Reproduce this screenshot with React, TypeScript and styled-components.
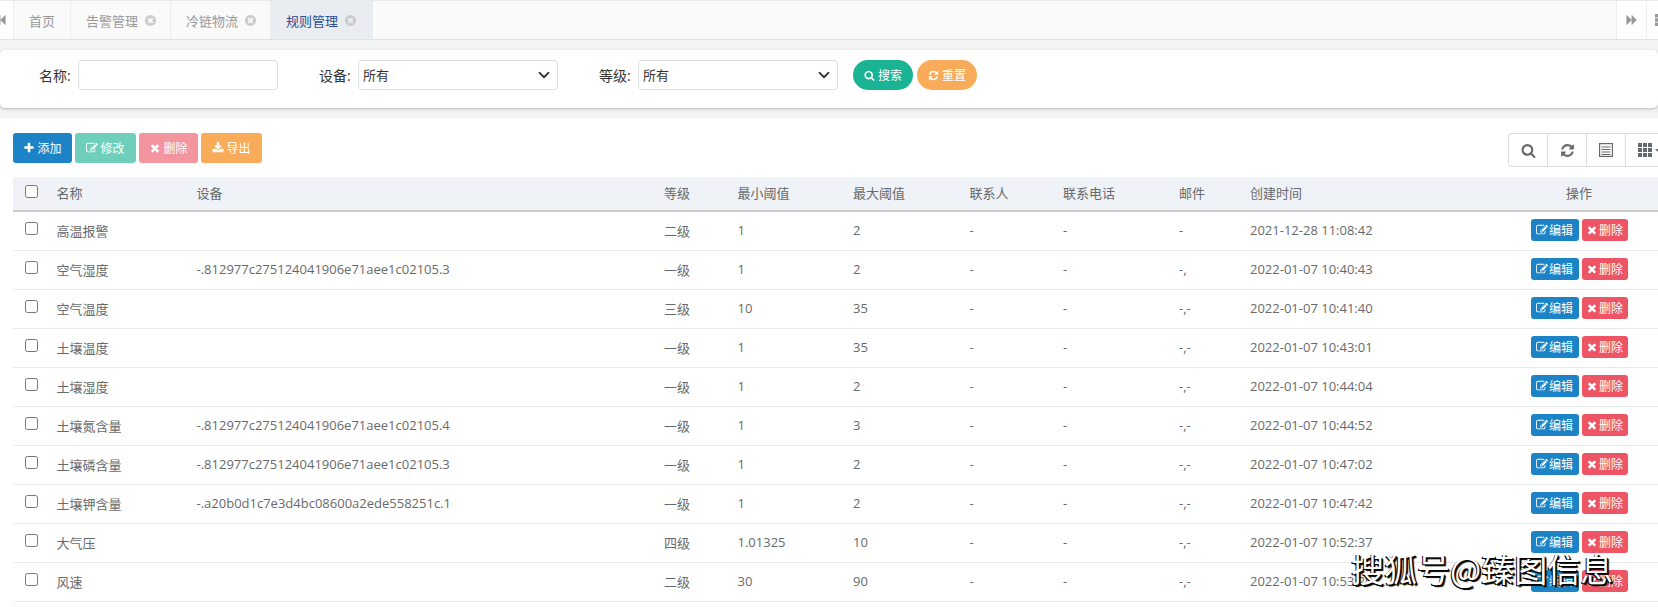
import React from "react";
import styled, {createGlobalStyle} from "styled-components";

const FONT = `"Open Sans", "Noto Sans CJK SC", sans-serif`;

const GlobalStyle = createGlobalStyle`
  html, body {
    margin: 0;
    height: 607px;
    overflow: hidden;
    background: #f3f3f4;
    font-family: ${FONT};
    font-size: 13px;
    color: #676a6c;
  }
`

// font awesome 4 outlines, 1792 grid
const ICONS = {
    plus: "M1600 736v192q0 40-28 68t-68 28h-416v416q0 40-28 68t-68 28h-192q-40 0-68-28t-28-68v-416h-416q-40 0-68-28t-28-68v-192q0-40 28-68t68-28h416v-416q0-40 28-68t68-28h192q40 0 68 28t28 68v416h416q40 0 68 28t28 68z",
    edit: "M888 1184l116-116-152-152-116 116v56h96v96h56zm440-720q-16-16-33 1l-350 350q-17 17-1 33t33-1l350-350q17-17 1-33zm80 594v190q0 119-84.5 203.5t-203.5 84.5h-832q-119 0-203.5-84.5t-84.5-203.5v-832q0-119 84.5-203.5t203.5-84.5h832q63 0 117 25 15 7 18 23 3 17-9 29l-49 49q-14 14-32 8-23-6-45-6h-832q-66 0-113 47t-47 113v832q0 66 47 113t113 47h832q66 0 113-47t47-113v-126q0-13 9-22l64-64q15-15 35-7t20 29zm-96-738l288 288-672 672h-288v-288zm444 132l-92 92-288-288 92-92q28-28 68-28t68 28l152 152q28 28 28 68t-28 68z",
    times: "M1490 1322q0 40-28 68l-136 136q-28 28-68 28t-68-28l-294-294-294 294q-28 28-68 28t-68-28l-136-136q-28-28-28-68t28-68l294-294-294-294q-28-28-28-68t28-68l136-136q28-28 68-28t68 28l294 294 294-294q28-28 68-28t68 28l136 136q28 28 28 68t-28 68l-294 294 294 294q28 28 28 68z",
    download: "M1344 1344q0-26-19-45t-45-19-45 19-19 45 19 45 45 19 45-19 19-45zm256 0q0-26-19-45t-45-19-45 19-19 45 19 45 45 19 45-19 19-45zm128-224v320q0 40-28 68t-68 28h-1472q-40 0-68-28t-28-68v-320q0-40 28-68t68-28h465l135 136q58 56 136 56t136-56l136-136h464q40 0 68 28t28 68zm-325-569q17 41-14 70l-448 448q-18 19-45 19t-45-19l-448-448q-31-29-14-70 17-39 59-39h256v-448q0-26 19-45t45-19h256q26 0 45 19t19 45v448h256q42 0 59 39z",
    search: "M1216 832q0-185-131.5-316.5t-316.5-131.5-316.5 131.5-131.5 316.5 131.5 316.5 316.5 131.5 316.5-131.5 131.5-316.5zm512 832q0 52-38 90t-90 38q-54 0-90-38l-343-342q-179 124-399 124-143 0-273.5-55.5t-225-150-150-225-55.5-273.5 55.5-273.5 150-225 225-150 273.5-55.5 273.5 55.5 225 150 150 225 55.5 273.5q0 220-124 399l343 343q37 37 37 90z",
    refresh: "M1639 1056q0 5-1 7-64 268-268 434.5t-478 166.5q-146 0-282.5-55t-243.5-157l-129 129q-19 19-45 19t-45-19-19-45v-448q0-26 19-45t45-19h448q26 0 45 19t19 45-19 45l-137 137q71 66 161 102t187 36q134 0 250-65t186-179q11-17 53-117 8-23 30-23h192q13 0 22.5 9.5t9.5 22.5zm25-800v448q0 26-19 45t-45 19h-448q-26 0-45-19t-19-45 19-45l138-138q-148-137-349-137-134 0-250 65t-186 179q-11 17-53 117-8 23-30 23h-199q-13 0-22.5-9.5t-9.5-22.5v-7q65-268 270-434.5t480-166.5q146 0 284 55.5t245 156.5l130-129q19-19 45-19t45 19 19 45z",
    timesCircle: "M1277 1122q0-26-19-45l-181-181 181-181q19-19 19-45 0-27-19-46l-90-90q-19-19-46-19-26 0-45 19l-181 181-181-181q-19-19-45-19-27 0-46 19l-90 90q-19 19-19 46 0 26 19 45l181 181-181 181q-19 19-19 45 0 27 19 46l90 90q19 19 46 19 26 0 45-19l181-181 181 181q19 19 45 19 27 0 46-19l90-90q19-19 19-46zm387-226q0 209-103 385.5t-279.5 279.5-385.5 103-385.5-103-279.5-279.5-103-385.5 103-385.5 279.5-279.5 385.5-103 385.5 103 279.5 279.5 103 385.5z",
    backward: "M1683 141q19-19 32-13t13 32v1472q0 26-13 32t-32-13l-710-710q-9-9-13-19v710q0 26-13 32t-32-13l-710-710q-19-19-19-45t19-45l710-710q19-19 32-13t13 32v710q4-10 13-19z",
    forward: "M109 1651q-19 19-32 13t-13-32v-1472q0-26 13-32t32 13l710 710q9 9 13 19v-710q0-26 13-32t32 13l710 710q19 19 19 45t-19 45l-710 710q-19 19-32 13t-13-32v-710q-4 10-13 19z",
};

const Icon = ({name}: { name: keyof typeof ICONS }) => (
    <svg viewBox="0 0 1792 1792" width="1em" height="1em" fill="currentColor">
        <path d={ICONS[name]}/>
    </svg>
);

const ListIcon = () => (
    <svg viewBox="0 0 14 14" width="14" height="14" fill="none" stroke="currentColor">
        <rect x="0.5" y="0.5" width="13" height="13" strokeWidth="1.4"/>
        <path d="M2.5 4h9M2.5 6.5h9M2.5 9h9M2.5 11.5h9" strokeWidth="1.1"/>
    </svg>
);

const GridIcon = () => (
    <svg viewBox="0 0 14 14" width="14" height="14" fill="currentColor">
        {[0, 5, 10].map(y => [0, 5, 10].map(x => (
            <rect key={`${x}-${y}`} x={x} y={y} width="4" height="4"/>
        )))}
    </svg>
);

const rows = [
    ["高温报警", "", "二级", "1", "2", "-", "2021-12-28 11:08:42"],
    ["空气湿度", "-.812977c275124041906e71aee1c02105.3", "一级", "1", "2", "-,", "2022-01-07 10:40:43"],
    ["空气温度", "", "三级", "10", "35", "-,-", "2022-01-07 10:41:40"],
    ["土壤温度", "", "一级", "1", "35", "-,-", "2022-01-07 10:43:01"],
    ["土壤湿度", "", "一级", "1", "2", "-,-", "2022-01-07 10:44:04"],
    ["土壤氮含量", "-.812977c275124041906e71aee1c02105.4", "一级", "1", "3", "-,-", "2022-01-07 10:44:52"],
    ["土壤磷含量", "-.812977c275124041906e71aee1c02105.3", "一级", "1", "2", "-,-", "2022-01-07 10:47:02"],
    ["土壤钾含量", "-.a20b0d1c7e3d4bc08600a2ede558251c.1", "一级", "1", "2", "-,-", "2022-01-07 10:47:42"],
    ["大气压", "", "四级", "1.01325", "10", "-,-", "2022-01-07 10:52:37"],
    ["风速", "", "二级", "30", "90", "-,-", "2022-01-07 10:53:20"],
];

const columns = [35.5, 140, 467.5, 73.5, 115.5, 116.5, 93.5, 116, 71, 258, 158];
const headers = ["名称", "设备", "等级", "最小阈值", "最大阈值", "联系人", "联系电话", "邮件", "创建时间"];

const App = () => (
    <Page>
        <GlobalStyle/>
        <TabBar>
            <NavEdge><Icon name="backward"/></NavEdge>
            <Tab>首页</Tab>
            <Tab>告警管理<CloseMark><Icon name="timesCircle"/></CloseMark></Tab>
            <Tab>冷链物流<CloseMark><Icon name="timesCircle"/></CloseMark></Tab>
            <Tab $active>规则管理<CloseMark><Icon name="timesCircle"/></CloseMark></Tab>
            <TabSpacer/>
            <NavButton><Icon name="forward"/></NavButton>
            <NavExit><GridIcon/></NavExit>
        </TabBar>

        <SearchCard>
            <Label>名称:</Label>
            <TextInput type="text"/>
            <Label $gap>设备:</Label>
            <Select><option>所有</option></Select>
            <Label $gap>等级:</Label>
            <Select><option>所有</option></Select>
            <PillRow>
                <PillButton $color="#1ab394"><Icon name="search"/>搜索</PillButton>
                <PillButton $color="#f8ac59"><Icon name="refresh"/>重置</PillButton>
            </PillRow>
        </SearchCard>

        <TableCard>
            <ToolRow>
                <ActionGroup>
                    <ActionButton $color="#1c84c6" $width={59}><Icon name="plus"/>添加</ActionButton>
                    <ActionButton $color="#1ab394" $width={61} $disabled><Icon name="edit"/>修改</ActionButton>
                    <ActionButton $color="#ed5565" $width={59} $disabled><Icon name="times"/>删除</ActionButton>
                    <ActionButton $color="#f8ac59" $width={61}><Icon name="download"/>导出</ActionButton>
                </ActionGroup>
                <ToolGroup>
                    <ToolButton><Icon name="search"/></ToolButton>
                    <ToolButton><Icon name="refresh"/></ToolButton>
                    <ToolButton><ListIcon/></ToolButton>
                    <ToolButton><GridIcon/><Caret/></ToolButton>
                </ToolGroup>
            </ToolRow>
            <Table>
                <colgroup>
                    {columns.map((w, i) => <col key={i} style={{width: w}}/>)}
                </colgroup>
                <thead>
                <tr>
                    <HeadCell><Check type="checkbox"/></HeadCell>
                    {headers.map(h => <HeadCell key={h}>{h}</HeadCell>)}
                    <HeadCell $center>操作</HeadCell>
                </tr>
                </thead>
                <tbody>
                {rows.map((r, i) => (
                    <tr key={i}>
                        <Cell><Check type="checkbox"/></Cell>
                        <Cell>{r[0]}</Cell>
                        <Cell>{r[1]}</Cell>
                        <Cell>{r[2]}</Cell>
                        <Cell>{r[3]}</Cell>
                        <Cell>{r[4]}</Cell>
                        <Cell>-</Cell>
                        <Cell>-</Cell>
                        <Cell>{r[5]}</Cell>
                        <Cell>{r[6]}</Cell>
                        <Cell $center>
                            <RowButton $color="#1c84c6" $width={48}><Icon name="edit"/>编辑</RowButton>
                            <RowButton $color="#ed5565" $width={46}><Icon name="times"/>删除</RowButton>
                        </Cell>
                    </tr>
                ))}
                </tbody>
            </Table>
        </TableCard>
        <Watermark>搜狐号@臻图信息</Watermark>
    </Page>
);

export default App;

const Page = styled.div`
  position: relative;
  width: 1658px;
  height: 607px;
  overflow: hidden;
`

const TabBar = styled.div`
  display: flex;
  height: 40px;
  box-sizing: border-box;
  border-top: 1px solid #e7eaec;
  border-bottom: 1px solid #dfe1e4;
  background: #fafafa;
`

const NavEdge = styled.div`
  width: 14px;
  flex: none;
  overflow: hidden;
  background: #fff;
  color: #999;
  display: flex;
  align-items: center;
  font-size: 12px;
  border-right: 1px solid #eee;
  box-sizing: border-box;

  svg {
    flex: none;
    margin-left: -6px;
  }
`

const Tab = styled.div<{ $active?: boolean }>`
  display: flex;
  align-items: center;
  min-width: 57px;
  padding: 0 ${p => p.$active ? 15 : 13}px 0 15px;
  box-sizing: border-box;
  font-size: 13px;
  color: ${p => p.$active ? "#2b4f8f" : "#999"};
  background: ${p => p.$active ? "#e9ecf1" : "transparent"};
  border-right: 1px solid ${p => p.$active ? "#e9ecf1" : "#eee"};
`

const CloseMark = styled.span`
  display: flex;
  margin-left: 6px;
  color: #ccc;
  font-size: 13px;
`

const TabSpacer = styled.div`
  flex: 1;
`

const NavButton = styled.div`
  width: 30px;
  flex: none;
  box-sizing: border-box;
  border-left: 1px solid #eee;
  background: #fff;
  color: #999;
  font-size: 12px;
  display: flex;
  align-items: center;
  justify-content: center;
`

const NavExit = styled(NavButton)`
  width: 12px;
  justify-content: flex-start;
  padding-left: 8px;
  overflow: hidden;

  svg {
    flex: none;
    width: 12px;
    height: 12px;
  }
`

const SearchCard = styled.div`
  display: flex;
  align-items: center;
  height: 58px;
  margin-top: 10px;
  padding: 10px 0 18px 39px;
  box-sizing: border-box;
  background: #fff;
  border-radius: 5px;
  box-shadow: 0 1px 3px rgba(0, 0, 0, .25);
`

const Label = styled.label<{ $gap?: boolean }>`
  flex: none;
  width: 31px;
  font-size: 14px;
  white-space: nowrap;
  color: #333;
  margin-left: ${p => p.$gap ? "41px" : "0"};
  margin-right: 8px;
`

const TextInput = styled.input`
  width: 200px;
  height: 30px;
  padding: 0 4px;
  box-sizing: border-box;
  border: 1px solid #dcdfe2;
  border-radius: 4px;
  background: #fff;
`

const Select = styled.select`
  width: 200px;
  height: 30px;
  padding: 0 0 0 4px;
  box-sizing: border-box;
  appearance: none;
  border: 1px solid #dcdfe2;
  border-radius: 4px;
  background: #fff url("data:image/svg+xml,%3Csvg xmlns='http://www.w3.org/2000/svg' viewBox='0 0 16 16'%3E%3Cpath fill='none' stroke='%23343a40' stroke-linecap='round' stroke-linejoin='round' stroke-width='2.4' d='M2 5l6 6 6-6'/%3E%3C/svg%3E") no-repeat right 7px center / 12px 12px;
  color: #333;
  font-family: ${FONT};
  font-size: 13px;
`

const PillRow = styled.div`
  display: flex;
  gap: 4px;
  margin-left: 15px;
`

const PillButton = styled.button<{ $color: string }>`
  display: flex;
  align-items: center;
  justify-content: center;
  gap: 3px;
  width: 60px;
  height: 30px;
  padding: 0;
  border: 0;
  border-radius: 15px;
  background: ${p => p.$color};
  color: #fff;
  font-family: ${FONT};
  font-size: 12px;

  svg {
    font-size: 11px;
  }
`

const TableCard = styled.div`
  margin-top: 10px;
  height: 489px;
  padding: 15px 0 0 13px;
  box-sizing: border-box;
  background: #fff;
`

const ToolRow = styled.div`
  display: flex;
  justify-content: space-between;
  align-items: flex-start;
  height: 44px;
`

const ActionGroup = styled.div`
  display: flex;
  gap: 3px;
`

const ActionButton = styled.button<{ $color: string; $width: number; $disabled?: boolean }>`
  display: flex;
  align-items: center;
  justify-content: center;
  gap: 2px;
  width: ${p => p.$width}px;
  height: 30px;
  padding: 0;
  border: 0;
  border-radius: 3px;
  background: ${p => p.$color};
  opacity: ${p => p.$disabled ? .62 : 1};
  color: #fff;
  font-family: ${FONT};
  font-size: 12px;

  svg {
    font-size: 12px;
  }
`

const ToolGroup = styled.div`
  display: flex;
  flex: none;
  width: 150px;
  height: 34px;
  box-sizing: border-box;
  border: 1px solid #ddd;
  border-right: 0;
  border-radius: 4px 0 0 4px;
`

const ToolButton = styled.div`
  flex: none;
  display: flex;
  align-items: center;
  justify-content: center;
  gap: 3px;
  width: 39px;
  box-sizing: border-box;
  border-right: 1px solid #ddd;
  color: #676a6c;
  font-size: 15px;

  &:last-child {
    border-right: 0;
    justify-content: flex-start;
    padding-left: 12px;
  }

  svg {
    flex: none;
  }
`

const Caret = styled.span`
  flex: none;
  border-top: 3px solid #676a6c;
  border-left: 3px solid transparent;
  border-right: 3px solid transparent;
`

const Table = styled.table`
  width: 1645px;
  table-layout: fixed;
  border-collapse: collapse;
`

const HeadCell = styled.th<{ $center?: boolean }>`
  height: 31px;
  padding: 0 8px 2px;
  background: #eff2f7;
  border-bottom: 2px solid #ccc;
  font-weight: normal;
  font-size: 13px;
  color: #676a6c;
  text-align: ${p => p.$center ? "center" : "left"};
`

const Cell = styled.td<{ $center?: boolean }>`
  height: 36px;
  padding: 0 8px 2px;
  border-bottom: 1px solid #e7eaec;
  text-align: ${p => p.$center ? "center" : "left"};
  white-space: nowrap;
  font-size: 13px;
`

const Check = styled.input`
  display: block;
  width: 13px;
  height: 13px;
  margin: -3px 0 0 4px;
`

const RowButton = styled.button<{ $color: string; $width: number }>`
  display: inline-flex;
  align-items: center;
  justify-content: center;
  width: ${p => p.$width}px;
  height: 22px;
  padding: 0;
  margin: 0 1.5px;
  border: 0;
  border-radius: 3px;
  background: ${p => p.$color};
  color: #fff;
  font-family: ${FONT};
  font-size: 12px;
  vertical-align: middle;

  svg {
    font-size: 12px;
    margin-right: 1px;
  }
`

const Watermark = styled.div`
  position: absolute;
  left: 1351px;
  top: 548px;
  font-family: "Noto Sans CJK SC", sans-serif;
  font-size: 33px;
  line-height: 40px;
  white-space: nowrap;
  color: #fff;
  text-shadow: 1px 1px 0 #000, -1px 1px 0 #000, 2px 2px 1px #000;
`
